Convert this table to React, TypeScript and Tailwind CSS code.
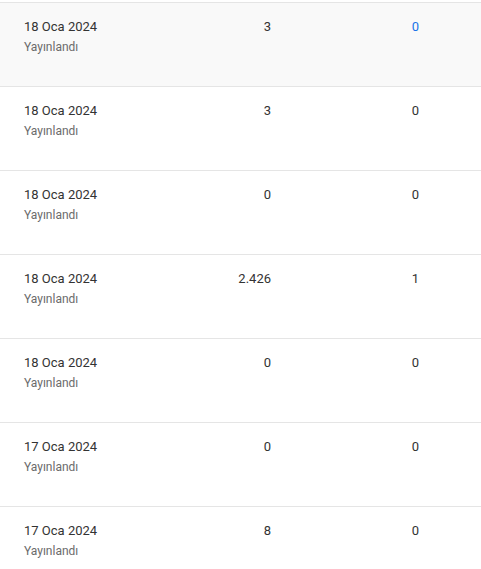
const rows = [
  { date: '18 Oca 2024', views: '3', comments: '0', active: true },
  { date: '18 Oca 2024', views: '3', comments: '0' },
  { date: '18 Oca 2024', views: '0', comments: '0' },
  { date: '18 Oca 2024', views: '2.426', comments: '1' },
  { date: '18 Oca 2024', views: '0', comments: '0' },
  { date: '17 Oca 2024', views: '0', comments: '0' },
  { date: '17 Oca 2024', views: '8', comments: '0' },
]

export default function App() {
  return (
    <div className="w-[481px] h-[569px] overflow-hidden bg-white pt-[2px] font-['Roboto',sans-serif]">
      <div className="border-t border-[#e5e5e5]">
        {rows.map((r, i) => (
          <div
            key={i}
            className={`flex h-[84px] border-b border-[#e5e5e5] pt-[14px] ${r.active ? 'bg-[#f9f9f9]' : 'bg-white'}`}
          >
            <div className="w-[150px] pl-6">
              <div className="text-[13px] leading-5 text-[#333333]">{r.date}</div>
              <div className="text-xs leading-5 text-[#6b6b6b]">Yayınlandı</div>
            </div>
            <div className="w-[121px] text-right text-[13px] leading-5 text-[#333333]">{r.views}</div>
            <div
              className={`w-[148px] text-right text-[13px] leading-5 ${r.active ? 'text-[#1a73e8]' : 'text-[#333333]'}`}
            >
              {r.comments}
            </div>
          </div>
        ))}
      </div>
    </div>
  )
}
